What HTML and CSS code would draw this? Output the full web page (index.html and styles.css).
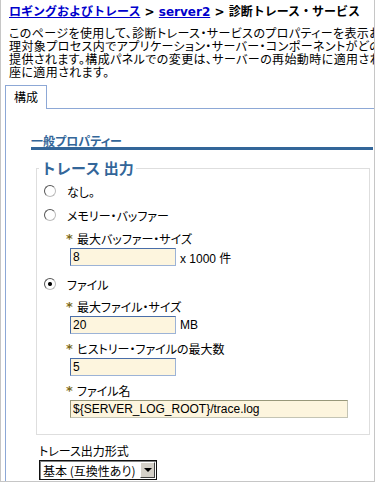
FILE: index.html
```html
<!DOCTYPE html>
<html lang="ja">
<head>
    <meta charset="UTF-8">
    <meta name="viewport" content="width=device-width, initial-scale=1.0">
    <title>診断トレース・サービス</title>
    <link rel="stylesheet" href="styles.css">
</head>
<body>
    <div class="frame">
        <!-- Breadcrumb -->
        <div class="crumbs">
            <a href="#">ロギングおよびトレース</a> &gt; <a href="#">server2</a> &gt; 診断トレース・サービス
        </div>

        <div class="intro">
            <div>このページを使用して、診断トレース・サービスのプロパティーを表示および構成します。診断トレース・サービスは、管</div>
            <div>理対象プロセス内でアプリケーション・サーバー・コンポーネントがどのように実行されているかについての詳細情報を</div>
            <div>提供されます。構成パネルでの変更は、サーバーの再始動時に適用されます。ランタイム・パネルでの変更は、即</div>
            <div>座に適用されます。</div>
        </div>

        <div class="tabs">
            <div class="tab">構成</div>
            <div class="tab-rest"></div>
        </div>

        <!-- Tab panel -->
        <div class="panel">
            <h3 class="section">一般プロパティー</h3>

            <fieldset class="group">
                <legend>トレース 出力</legend>

                <label class="choice"><input type="radio" name="output"> なし。</label>
                <label class="choice second"><input type="radio" name="output"> メモリー・バッファー</label>

                <div class="field first">
                    <label for="buffer"><span class="req">*</span>最大バッファー・サイズ</label>
                    <div class="row">
                        <input type="text" id="buffer" class="text" value="8">
                        <span class="unit">x 1000 件</span>
                    </div>
                </div>

                <label class="choice third"><input type="radio" name="output" checked> ファイル</label>

                <div class="field">
                    <label for="max-size"><span class="req">*</span>最大ファイル・サイズ</label>
                    <div class="row">
                        <input type="text" id="max-size" class="text" value="20">
                        <span class="unit">MB</span>
                    </div>
                </div>

                <div class="field">
                    <label for="history"><span class="req">*</span>ヒストリー・ファイルの最大数</label>
                    <div class="row">
                        <input type="text" id="history" class="text" value="5">
                    </div>
                </div>

                <div class="field">
                    <label for="file-name"><span class="req">*</span>ファイル名</label>
                    <div class="row">
                        <input type="text" id="file-name" class="text wide" value="${SERVER_LOG_ROOT}/trace.log">
                    </div>
                </div>
            </fieldset>

            <div class="format">
                <label>トレース出力形式</label>
                <div class="select">
                    <span class="select-text">基本 (互換性あり)</span>
                    <span class="select-btn"></span>
                </div>
            </div>
        </div>
    </div>
</body>
</html>
```

FILE: styles.css
```css
body {
    margin: 0;
    font-family: "Noto Sans CJK JP", "Liberation Sans", sans-serif;
    font-size: 12px;
    color: #000;
    background: #fff;
    font-feature-settings: "palt";
}
.frame {
    width: 375px;
    height: 482px;
    box-sizing: border-box;
    border: 1px solid #c6c6c6;
    border-top: none;
    padding-left: 4px;
    display: flex;
    flex-direction: column;
    overflow: hidden;
}
.crumbs {
    margin-top: 4px;
    padding-left: 4px;
    font-family: "DejaVu Sans", "Noto Sans CJK JP", sans-serif;
    font-size: 12px;
    font-weight: bold;
    line-height: 16px;
    white-space: nowrap;
    font-feature-settings: normal;
}
.crumbs a {
    color: #0000cc;
}
.intro {
    margin-top: 6px;
    padding-left: 4px;
    line-height: 13px;
    letter-spacing: 0.4px;
    white-space: nowrap;
}
.tabs {
    display: flex;
    margin-top: 7px;
}
.tab {
    width: 42px;
    height: 24px;
    box-sizing: border-box;
    border: 1px solid #8da8d6;
    border-bottom: none;
    text-align: center;
    line-height: 22px;
}
.tab-rest {
    flex: 1;
    height: 24px;
    box-sizing: border-box;
    border-bottom: 1px solid #8da8d6;
}
.panel {
    flex: 1;
    border-left: 1px solid #8da8d6;
}
.section {
    margin: 25px 1px 0 25px;
    font-size: 12px;
    line-height: 13px;
    font-weight: bold;
    color: #336699;
    border-bottom: 3px solid #336699;
}
.group {
    margin: 10px 4px 0 30px;
    padding: 0 0 16px 0;
    border: 1px solid #dedede;
    min-width: 0;
}
.group legend {
    margin-left: 2px;
    padding: 0 2px;
    font-size: 15px;
    line-height: 16px;
    font-weight: bold;
    color: #336699;
    font-feature-settings: normal;
}
.choice {
    display: flex;
    align-items: center;
    height: 16px;
    margin: 7px 0 0 7px;
}
.choice.second {
    margin-top: 8px;
}
.choice.third {
    margin-top: 10px;
}
.choice input {
    appearance: none;
    width: 12px;
    height: 12px;
    margin: 0 11px 0 0;
    border-radius: 50%;
    border: 1px solid;
    border-color: #555 #bbb #bbb #555;
    background: #fff;
}
.choice input:checked {
    background: radial-gradient(circle, #000 1.5px, #fff 2.5px);
}
.field {
    margin-top: 7px;
    padding-left: 33px;
}
.field.first {
    margin-top: 8px;
}
.field label {
    display: block;
    margin-left: -4px;
    line-height: 16px;
}
.req {
    display: inline-block;
    width: 11px;
    font-family: "DejaVu Sans", sans-serif;
    font-weight: bold;
    font-size: 13px;
    color: #7d6b1c;
    vertical-align: top;
    line-height: 15px;
}
.row {
    display: flex;
    align-items: center;
    margin-top: 1px;
}
.text {
    width: 106px;
    height: 18px;
    box-sizing: border-box;
    margin: 0;
    padding: 0 2px;
    border: 1px solid;
    border-color: #4a6ea9 #9cb3d6 #9cb3d6 #4a6ea9;
    background: #fdf5de;
    font-family: "Liberation Sans", sans-serif;
    font-size: 12px;
    color: #000;
}
.text.wide {
    width: 278px;
    border-color: #98987a #c4c4b4 #c4c4b4 #98987a;
}
.unit {
    margin-left: 4px;
    font-family: "Liberation Sans", "Noto Sans CJK JP", sans-serif;
}
.format {
    margin: 8px 0 0 33px;
}
.format label {
    display: block;
    line-height: 16px;
}
.select {
    display: flex;
    align-items: center;
    width: 118px;
    height: 20px;
    box-sizing: border-box;
    margin-top: 1px;
    border: 1px solid #111;
    box-shadow: inset 1px 1px 0 #808080;
    padding-left: 3px;
}
.select-text {
    flex: 1;
    white-space: nowrap;
}
.select-btn {
    position: relative;
    width: 15px;
    height: 16px;
    margin-right: 1px;
    box-sizing: border-box;
    background: #d4d0c8;
    border: 1px solid;
    border-color: #fff #404040 #404040 #fff;
}
.select-btn::after {
    content: "";
    position: absolute;
    left: 3px;
    top: 5px;
    border-left: 4px solid transparent;
    border-right: 4px solid transparent;
    border-top: 4px solid #000;
}
```
